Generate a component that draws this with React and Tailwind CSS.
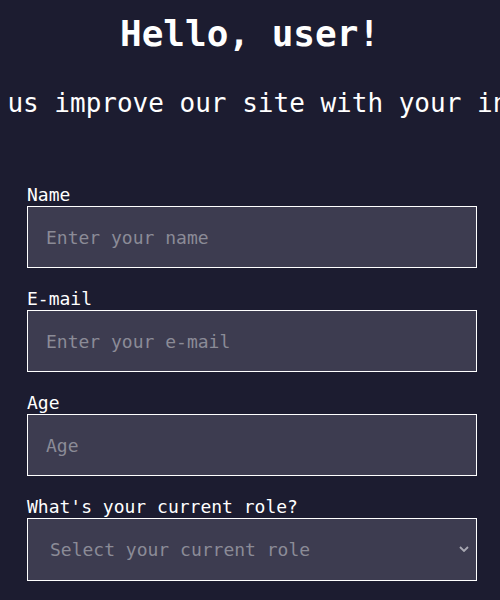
import React from "react";

const mono = { fontFamily: '"DejaVu Sans Mono", "Liberation Mono", monospace' };

const Field = ({ label, placeholder, type = "text" }) => (
  <div className="flex flex-col">
    <label className="text-[18px] leading-[22px] text-white">{label}</label>
    <input
      type={type}
      placeholder={placeholder}
      className="h-[62px] w-full border border-white bg-[#3d3c50] px-[18px] text-[18px] text-white outline-none placeholder:text-[#8b8b97]"
      style={mono}
    />
  </div>
);

export default function App() {
  return (
    <div className="min-h-[600px] w-full overflow-hidden bg-[#1c1c30] text-white" style={mono}>
      {/* header */}
      <div className="flex flex-col items-center pt-[12px]">
        <h1 className="text-[36px] leading-[44px] font-bold">Hello, user!</h1>
        <div className="flex w-full justify-center mt-[32px]">
          <p className="whitespace-nowrap text-[26px] leading-[30px]">
            Help us improve our site with your input!
          </p>
        </div>
      </div>

      {/* form */}
      <form className="ml-[27px] mt-[66px] flex w-[450px] flex-col gap-[20px]">
        <Field label="Name" placeholder="Enter your name" />
        <Field label="E-mail" placeholder="Enter your e-mail" type="email" />
        <Field label="Age" placeholder="Age" type="number" />
        <div className="flex flex-col">
          <label className="text-[18px] leading-[22px] text-white">What's your current role?</label>
          <div className="relative">
            <select
              defaultValue=""
              className="h-[63px] w-full appearance-none border border-white bg-[#3d3c50] px-[22px] text-[18px] text-[#8b8b97] outline-none"
              style={mono}
            >
              <option value="" disabled>Select your current role</option>
              <option>Student</option>
              <option>Full-time job</option>
              <option>Other</option>
            </select>
            <svg
              className="pointer-events-none absolute right-[8px] top-[28px]"
              width="10"
              height="6"
              viewBox="0 0 10 6"
              fill="none"
              stroke="#a8a8b2"
              strokeWidth="1.8"
            >
              <path d="M1 1l4 4 4-4" />
            </svg>
          </div>
        </div>
      </form>
    </div>
  );
}
